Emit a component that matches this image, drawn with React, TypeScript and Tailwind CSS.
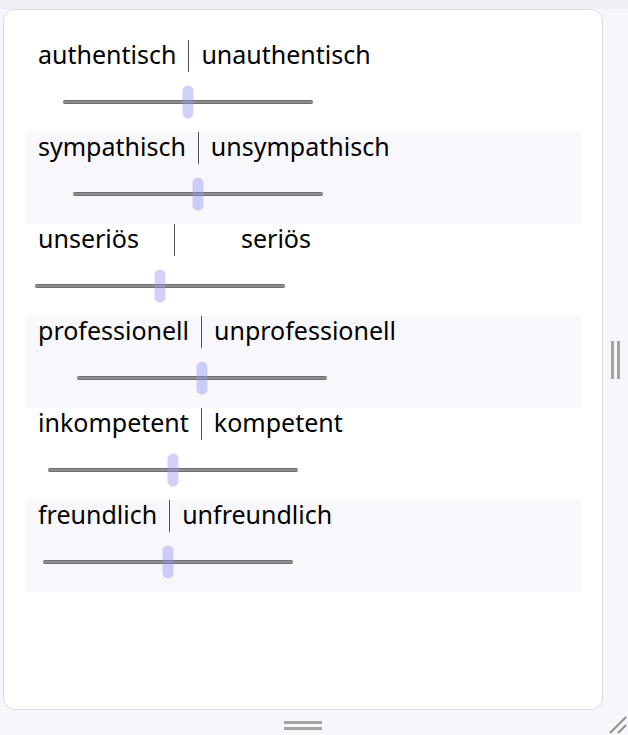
import React from "react";

type Scale = {
  left: string;
  right: string;
  trackLeft: number;
  leftWidth?: string;
  rightGap?: string;
};

const scales: Scale[] = [
  { left: "authentisch", right: "unauthentisch", trackLeft: 38 },
  { left: "sympathisch", right: "unsympathisch", trackLeft: 48 },
  { left: "unseriös", right: "seriös", trackLeft: 10, leftWidth: "w-[124px]", rightGap: "pl-[54px]" },
  { left: "professionell", right: "unprofessionell", trackLeft: 52 },
  { left: "inkompetent", right: "kompetent", trackLeft: 23 },
  { left: "freundlich", right: "unfreundlich", trackLeft: 18 },
];

function Slider({ offset }: { offset: number }) {
  return (
    <div className="h-[60px] flex items-center" style={{ paddingLeft: offset }}>
      <div className="relative w-[250px] h-[4px] rounded-sm bg-[#8e8e8e] border-y border-[#6f6f6f]">
        <div className="absolute left-1/2 top-1/2 -translate-x-1/2 -translate-y-1/2 w-[11px] h-[33px] rounded-full bg-[rgba(150,150,240,0.45)]" />
      </div>
    </div>
  );
}

function ScaleRow({ scale, shaded }: { scale: Scale; shaded: boolean }) {
  return (
    <div className={`h-[92px] ${shaded ? "bg-[#f8f8fc]" : "bg-white"}`}>
      <div className="flex h-[32px] pl-[13px] text-[25px] leading-[28px] text-black">
        <span className={scale.leftWidth ?? ""}>{scale.left}</span>
        <div className="mx-3 w-px bg-[#555]" />
        <span className={scale.rightGap ?? ""}>{scale.right}</span>
      </div>
      <Slider offset={scale.trackLeft} />
    </div>
  );
}

export default function App() {
  return (
    <div
      className="relative w-[628px] h-[735px] overflow-hidden bg-[#f6f7fb]"
      style={{ fontFamily: "'Noto Sans', 'Open Sans', sans-serif" }}
    >
      <div className="absolute inset-x-0 top-0 h-[9px] bg-[#eef0f5]" />
      <div className="relative flex pt-[9px]">
        <div className="pl-[3px]">
          <div className="w-[600px] h-[701px] rounded-xl border border-[#dcdcdc] bg-white pt-[30px] pl-[21px] pr-[21px]">
            {scales.map((s, i) => (
              <ScaleRow key={s.left} scale={s} shaded={i % 2 === 1} />
            ))}
          </div>
        </div>
        <div className="flex-1 flex items-center justify-center gap-[3px]">
          <div className="w-[3px] h-[38px] bg-[#a3a3a3]" />
          <div className="w-[3px] h-[38px] bg-[#a3a3a3]" />
        </div>
      </div>
      <div className="w-[606px] flex flex-col items-center gap-[3px] pt-[11px]">
        <div className="w-[38px] h-[3px] bg-[#a3a3a3]" />
        <div className="w-[38px] h-[3px] bg-[#a3a3a3]" />
      </div>
      <svg className="absolute right-0 bottom-0" width="22" height="22" viewBox="0 0 22 22">
        <line x1="4" y1="20" x2="20" y2="4" stroke="#8f8f8f" strokeWidth="2" />
        <line x1="12" y1="20" x2="20" y2="12" stroke="#8f8f8f" strokeWidth="2" />
      </svg>
    </div>
  );
}
